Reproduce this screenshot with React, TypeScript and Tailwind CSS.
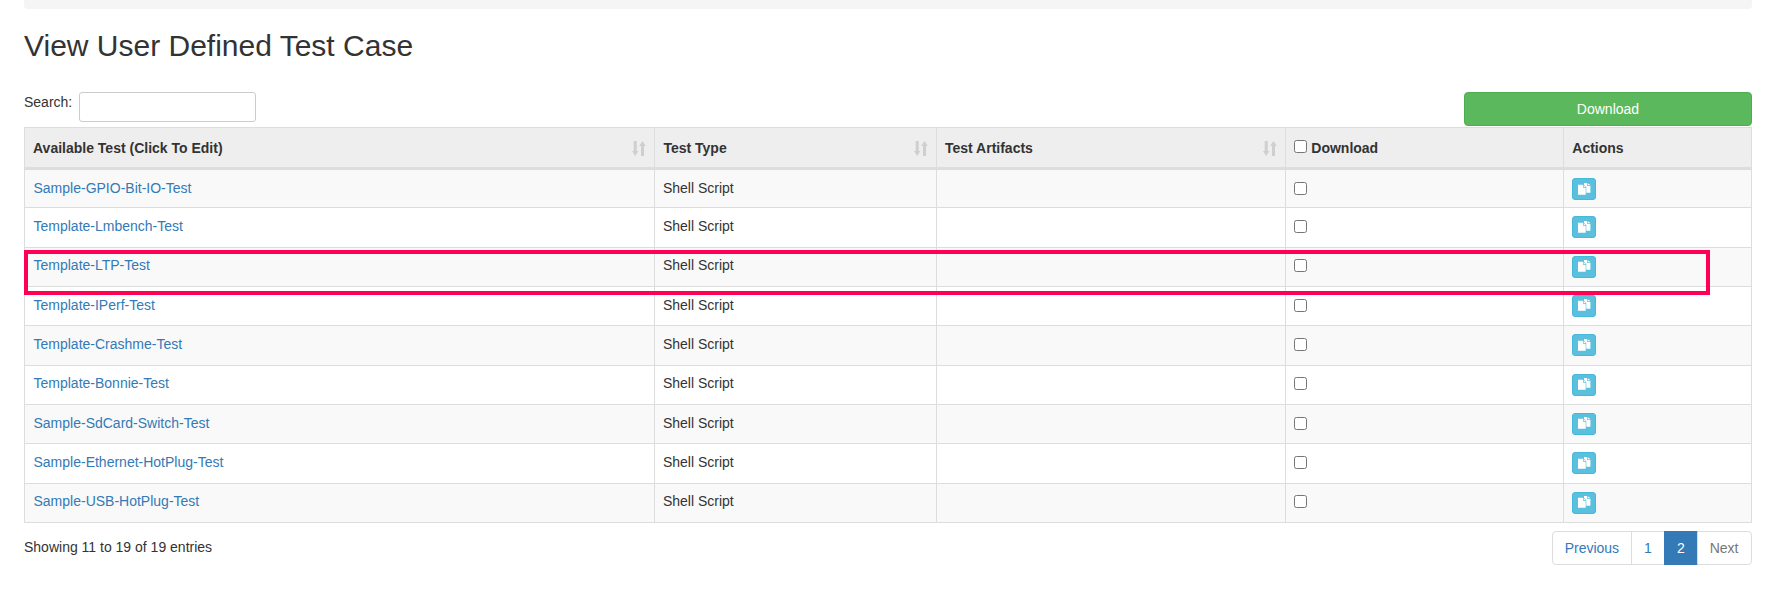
import React from 'react';

const TESTS = [
  'Sample-GPIO-Bit-IO-Test',
  'Template-Lmbench-Test',
  'Template-LTP-Test',
  'Template-IPerf-Test',
  'Template-Crashme-Test',
  'Template-Bonnie-Test',
  'Sample-SdCard-Switch-Test',
  'Sample-Ethernet-HotPlug-Test',
  'Sample-USB-HotPlug-Test',
];

function SortIcon() {
  return (
    <svg width="14" height="15" viewBox="0 0 14 15" className="absolute right-2 top-[13px] text-[#cfcfcf]" fill="currentColor">
      <path d="M1.7 0h3v10h1.7L3.2 15 0 10h1.7z" />
      <path d="M10.5 0l3.3 5h-1.8v10H9V5H7.2z" />
    </svg>
  );
}

function CopyIcon() {
  return (
    <svg width="13" height="12" viewBox="0 0 13 12" fill="white" className="mb-[1px]">
      <path d="M0 1.8h5v3h2.7v6.9H0z" />
      <path d="M5.6 2l2 2.1h-2z" />
      <path d="M6 0h3v2.8h3.4v6.9H8.3V4.3L6 1.8z" />
      <path d="M9.7 0.2l2.7 1.9H9.7z" />
    </svg>
  );
}

function HeadCell({ label, width, sort }: { label: string; width: string; sort?: boolean }) {
  return (
    <th className={`relative border border-b-[3px] border-[#ddd] bg-[#eee] px-2 pb-[9px] text-left align-bottom font-bold ${width}`}>
      {label}
      {sort && <SortIcon />}
    </th>
  );
}

export default function App() {
  return (
    <div className="relative h-[611px] overflow-hidden bg-white pl-6 pr-[23.5px] font-['Liberation_Sans',Arial,sans-serif] text-sm leading-5 text-[#333]">
      <div className="h-[9px] rounded-b bg-[#f5f5f5]" />
      <h2 className="mt-5 mb-[30px] text-[30px] leading-[33px] font-normal">View User Defined Test Case</h2>

      <div className="flex h-[35px] items-start justify-between">
        <label className="flex items-start gap-[7px]">
          Search:
          <input type="search" className="h-[30px] w-[177px] rounded-[3px] border border-[#ccc] bg-white" />
        </label>
        <button className="h-[34px] w-[288px] rounded border border-[#4cae4c] bg-[#5cb85c] pl-[1px] text-white">Download</button>
      </div>

      <table className="w-full table-fixed border-collapse">
        <thead>
          <tr className="h-[41px]">
            <HeadCell label="Available Test (Click To Edit)" width="w-[630.4px]" sort />
            <HeadCell label="Test Type" width="w-[281.6px]" sort />
            <HeadCell label="Test Artifacts" width="w-[349.3px]" sort />
            <th className="w-[278px] border border-b-[3px] border-[#ddd] bg-[#eee] px-2 pb-[9px] text-left align-bottom font-bold">
              <input type="checkbox" className="mr-1 align-[0.5px]" />
              Download
            </th>
            <th className="border border-b-[3px] border-[#ddd] bg-[#eee] px-2 pb-[9px] text-left align-bottom font-bold">Actions</th>
          </tr>
        </thead>
        <tbody>
          {TESTS.map((name, i) => (
            <tr key={name} className={`h-[39.33px] ${i % 2 === 0 ? 'bg-[#f9f9f9]' : 'bg-white'}`}>
              <td className="border border-[#ddd] pt-[7.7px] pr-2 pl-[8.5px] align-top text-[#337ab7]">{name}</td>
              <td className="border border-[#ddd] pt-[7.7px] pr-2 pl-[7.5px] align-top">Shell Script</td>
              <td className="border border-[#ddd] px-2 pt-[7.7px] align-top" />
              <td className="border border-[#ddd] px-2 pt-[7.7px] align-top">
                <input type="checkbox" className="mt-1 block" />
              </td>
              <td className="border border-[#ddd] px-2 pt-2 align-top">
                <button className="flex h-[22px] w-6 items-center justify-center rounded-[3px] border border-[#46b8da] bg-[#5bc0de]">
                  <CopyIcon />
                </button>
              </td>
            </tr>
          ))}
        </tbody>
      </table>

      <div className="mt-2 flex items-start justify-between">
        <div className="pt-[6px]">Showing 11 to 19 of 19 entries</div>
        <ul className="flex h-[34px] text-[#337ab7]">
          <li className="rounded-l border border-[#ddd] px-3 py-[6px]">Previous</li>
          <li className="-ml-px border border-[#ddd] px-3 py-[6px]">1</li>
          <li className="-ml-px border border-[#337ab7] bg-[#337ab7] px-3 py-[6px] text-white">2</li>
          <li className="-ml-px rounded-r border border-[#ddd] px-3 py-[6px] text-[#777]">Next</li>
        </ul>
      </div>

      {/* annotation box drawn over the third row */}
      <div className="pointer-events-none absolute top-[250px] left-6 h-[44.5px] w-[1686px] border-[4.5px] border-[#ff0055]" />
    </div>
  );
}
